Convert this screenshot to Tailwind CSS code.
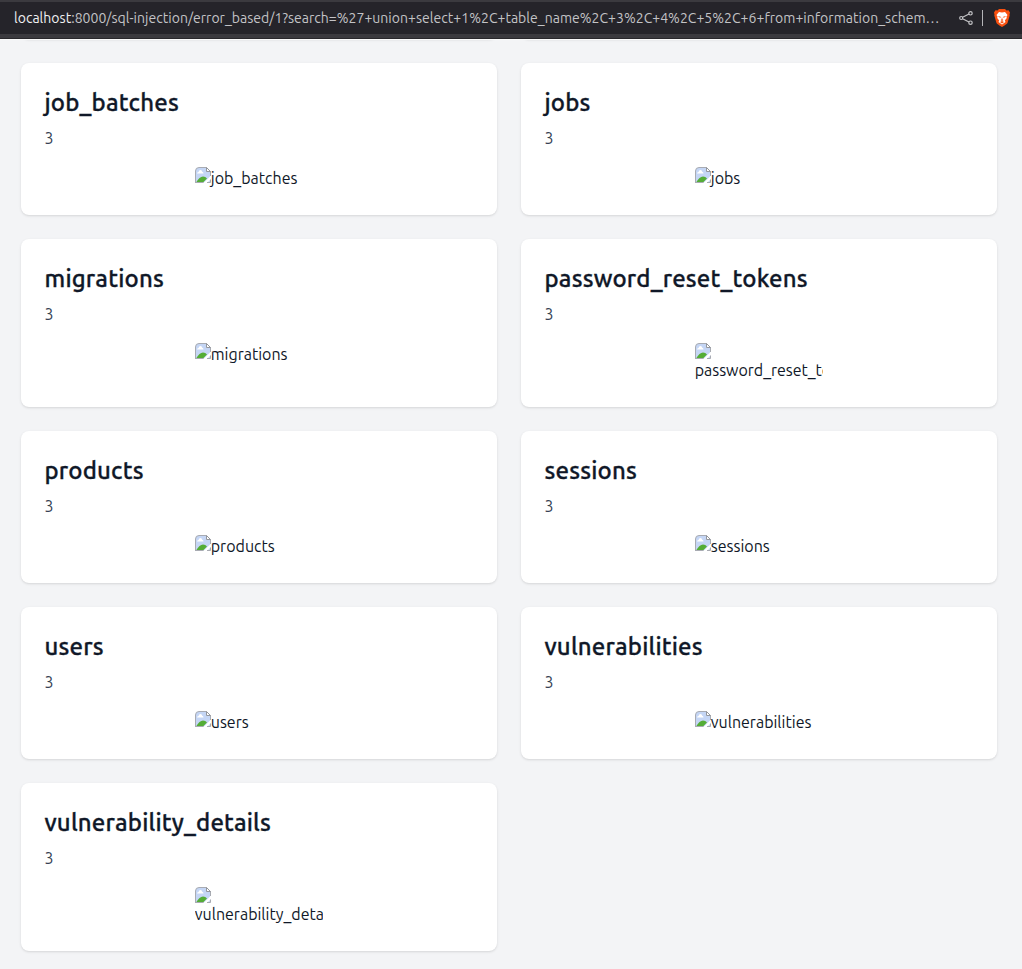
<!DOCTYPE html>
<html lang="en">
<head>
<meta charset="utf-8">
<title>Products</title>
<script src="https://cdn.jsdelivr.net/npm/@tailwindcss/browser@4"></script>
</head>
<body class="bg-gray-100 font-['Ubuntu','Noto_Sans',sans-serif] h-[969px] overflow-hidden">
<svg class="hidden">
  <symbol id="broken" viewBox="0 0 16 16">
    <path d="M.5 15.5V4Q.5.5 4 .5h7.500l4 4v11z" fill="#c5d6f5"/>
    <path d="M2 6.500q0-1.500 1.500-1.500Q4 3 5.500 3t1.700 1.800q1.300 0 1.300 1.700z" fill="#fff"/>
    <path d="M1 15.500q3.500-6 7-6 2.500 0 4 2l-4 4z" fill="#54ad36"/>
    <path d="M8.500 16 16 8.500V12l-4 4z" fill="#fff"/>
    <path d="M.5 16V4Q.5.5 4 .5h7.500l4 4V9M1 15.500h7.500M15.500 12.500v3H12" fill="none" stroke="#a8abb2"/>
    <path d="M11.500.5v4h4z" fill="#fff" stroke="#94979d"/>
  </symbol>
</svg>
<header class="h-[39px] bg-[#25242a] border-t-2 border-[#3b3a3f] flex flex-col text-[14px] text-[#c3c3c6]">
  <div class="h-8 pl-[14px] pr-[12px] flex items-center">
    <div class="w-[945px] shrink-0 whitespace-nowrap tracking-[0.025px]"><span class="text-[#f0f0f2]">localhost</span>:8000/sql-injection/error_based/1?search=%27+union+select+1%2C+table_name%2C+3%2C+4%2C+5%2C+6+from+information_schem…</div>
    <svg class="w-[14px] h-[14px] shrink-0" viewBox="0 0 14 14" fill="none" stroke="#c3c3c6" stroke-width="1.2"><circle cx="2.200" cy="7" r="1.500"/><circle cx="11.500" cy="2.300" r="1.700"/><circle cx="11.500" cy="11.700" r="1.700"/><path d="M3.600 6.300 10 3M3.600 7.700l6.400 3.300"/></svg>
    <div class="w-px h-4 bg-[#b5b5b9] ml-[9px]"></div>
    <svg class="w-4 h-[18px] ml-[11px] shrink-0" viewBox="0 0 16 18"><path d="M5 0h6l1.500 1.500 2-.2L16 3.500l-.5 2 .2 1-2.200 7.500Q13 15 8 18 3 15 2.500 14L.3 6.500l.2-1-.5-2 1.500-2.200 2 .2z" fill="#f9500f"/><path d="m5 3 3 .5L11 3l2.500 3-1 1.500.3 1.500-2 2.500.7 1.500L8 15.500 4.500 13l.7-1.500-2-2.500.3-1.500-1-1.500z" fill="#fff"/><path d="m3.800 7 3 .7L6.300 9zM12.200 7l-3 .7.5 1.300zM8 8l.5 2.500L9.500 11 8 12l-1.500-1 1-.5zM6 13l2-1 2 1-2 1.500z" fill="#f9500f"/></svg>
  </div>
  <div class="h-[5px] bg-[#3b3a3f] border-b border-[#29282c]"></div>
</header>
<main class="h-[930px] overflow-hidden border-t border-[#fafafb]">
  <div class="-mt-[25px] ml-[21px] w-[976px] grid grid-cols-2 gap-6 text-gray-900">
    <div class="h-6 bg-white rounded-lg shadow-sm"></div><div class="h-6 bg-white rounded-lg shadow-sm"></div>
    <article class="h-[152px] bg-white rounded-lg shadow-sm p-6 pl-[23.5px]"><h2 class="text-2xl font-medium tracking-[0.17px] [-webkit-text-stroke:0.3px] mb-2 whitespace-nowrap">job_batches</h2><p class="leading-[22px] text-gray-700">3</p><div class="mt-[18px] mx-auto w-32 flex overflow-hidden leading-[22px]"><svg class="size-4 shrink-0"><use href="#broken"/></svg>job_batches</div></article>
    <article class="h-[152px] bg-white rounded-lg shadow-sm p-6 pl-[23.5px]"><h2 class="text-2xl font-medium tracking-[0.17px] [-webkit-text-stroke:0.3px] mb-2 whitespace-nowrap">jobs</h2><p class="leading-[22px] text-gray-700">3</p><div class="mt-[18px] mx-auto w-32 flex overflow-hidden leading-[22px]"><svg class="size-4 shrink-0"><use href="#broken"/></svg>jobs</div></article>
    <article class="h-[168px] bg-white rounded-lg shadow-sm p-6 pl-[23.5px]"><h2 class="text-2xl font-medium tracking-[0.17px] [-webkit-text-stroke:0.3px] mb-2 whitespace-nowrap">migrations</h2><p class="leading-[22px] text-gray-700">3</p><div class="mt-[18px] mx-auto w-32 flex overflow-hidden leading-[22px]"><svg class="size-4 shrink-0"><use href="#broken"/></svg>migrations</div></article>
    <article class="h-[168px] bg-white rounded-lg shadow-sm p-6 pl-[23.5px]"><h2 class="text-2xl font-medium tracking-[0.17px] [-webkit-text-stroke:0.3px] mb-2 whitespace-nowrap">password_reset_tokens</h2><p class="leading-[22px] text-gray-700">3</p><div class="mt-[18px] mx-auto w-32 overflow-hidden leading-[22px] tracking-[-0.03px]"><svg class="size-4 block"><use href="#broken"/></svg>password_reset_tokens</div></article>
    <article class="h-[152px] bg-white rounded-lg shadow-sm p-6 pl-[23.5px]"><h2 class="text-2xl font-medium tracking-[0.17px] [-webkit-text-stroke:0.3px] mb-2 whitespace-nowrap">products</h2><p class="leading-[22px] text-gray-700">3</p><div class="mt-[18px] mx-auto w-32 flex overflow-hidden leading-[22px]"><svg class="size-4 shrink-0"><use href="#broken"/></svg>products</div></article>
    <article class="h-[152px] bg-white rounded-lg shadow-sm p-6 pl-[23.5px]"><h2 class="text-2xl font-medium tracking-[0.17px] [-webkit-text-stroke:0.3px] mb-2 whitespace-nowrap">sessions</h2><p class="leading-[22px] text-gray-700">3</p><div class="mt-[18px] mx-auto w-32 flex overflow-hidden leading-[22px]"><svg class="size-4 shrink-0"><use href="#broken"/></svg>sessions</div></article>
    <article class="h-[152px] bg-white rounded-lg shadow-sm p-6 pl-[23.5px]"><h2 class="text-2xl font-medium tracking-[0.17px] [-webkit-text-stroke:0.3px] mb-2 whitespace-nowrap">users</h2><p class="leading-[22px] text-gray-700">3</p><div class="mt-[18px] mx-auto w-32 flex overflow-hidden leading-[22px]"><svg class="size-4 shrink-0"><use href="#broken"/></svg>users</div></article>
    <article class="h-[152px] bg-white rounded-lg shadow-sm p-6 pl-[23.5px]"><h2 class="text-2xl font-medium tracking-[0.17px] [-webkit-text-stroke:0.3px] mb-2 whitespace-nowrap">vulnerabilities</h2><p class="leading-[22px] text-gray-700">3</p><div class="mt-[18px] mx-auto w-32 flex overflow-hidden leading-[22px]"><svg class="size-4 shrink-0"><use href="#broken"/></svg>vulnerabilities</div></article>
    <article class="h-[168px] bg-white rounded-lg shadow-sm p-6 pl-[23.5px]"><h2 class="text-2xl font-medium tracking-[0.17px] [-webkit-text-stroke:0.3px] mb-2 whitespace-nowrap">vulnerability_details</h2><p class="leading-[22px] text-gray-700">3</p><div class="mt-[18px] mx-auto w-32 overflow-hidden leading-[22px]"><svg class="size-4 block"><use href="#broken"/></svg>vulnerability_details</div></article>
  </div>
</main>
</body>
</html>
